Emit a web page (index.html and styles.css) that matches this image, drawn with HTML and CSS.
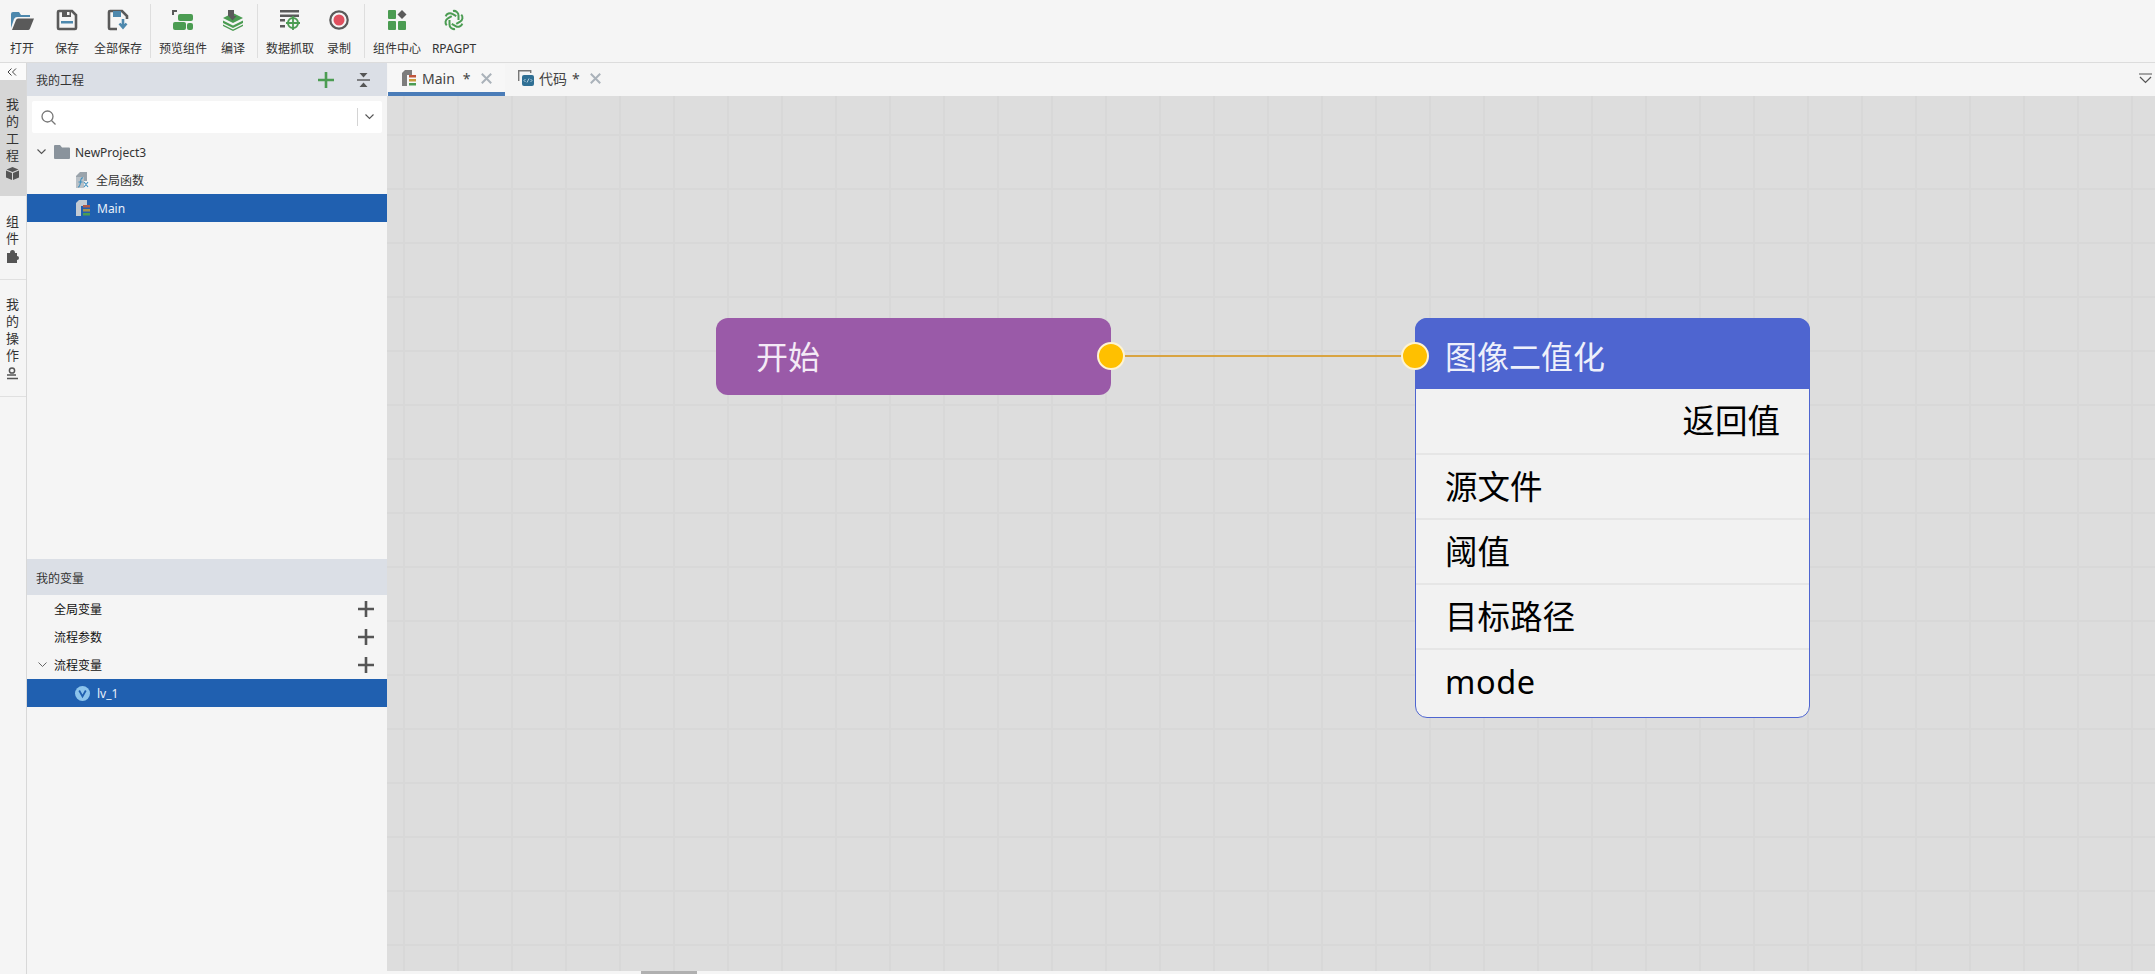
FILE: index.html
```html
<!DOCTYPE html>
<html lang="en">
<head>
  <meta charset="UTF-8" />
  <title>RPA Editor</title>
  <link rel="stylesheet" href="styles.css">
</head>
<body>

  <!-- Toolbar -->
  <header class="toolbar">
    <div class="tool-group group-file">
      <div class="tool w44">
        <svg width="26" height="22" viewBox="0 0 26 22"><path d="M2 19V5q0-2 2-2h6l2 3h9v2H8q-2 0-3 2l-3 9z" fill="#4d88ad"/><path d="M3 21l4-10q.6-1.500 2-1.500h16L21 19.500q-.6 1.500-2 1.500z" fill="#5a5a5a"/></svg>
        <span>打开</span>
      </div>
      <div class="tool w44 gap-left">
        <svg width="22" height="22" viewBox="0 0 22 22"><path d="M3 2h13l4 4v13q0 1-1 1H3q-1 0-1-1V3q0-1 1-1z" fill="none" stroke="#5a5a5a" stroke-width="2.600"/><rect x="6" y="2" width="9" height="6" fill="#5a5a5a"/><rect x="11" y="3" width="2.500" height="3" fill="#f5f5f5"/><rect x="5" y="12" width="12" height="2.500" fill="#4d88ad"/></svg>
        <span>保存</span>
      </div>
      <div class="tool w58">
        <svg width="22" height="22" viewBox="0 0 22 22"><path d="M10 20H3q-1 0-1-1V3q0-1 1-1h12l5 5v3" fill="none" stroke="#5a5a5a" stroke-width="2.600"/><rect x="6" y="2" width="8" height="6" fill="#4d88ad"/><path d="M16 10v7M12.500 14.500l3.500 4 3.500-4" fill="none" stroke="#4d88ad" stroke-width="2.600"/></svg>
        <span>全部保存</span>
      </div>
    </div>
    <div class="tool-group group-build">
      <div class="tool w62">
        <svg width="22" height="22" viewBox="0 0 22 22"><path d="M1 6V2h4" fill="none" stroke="#5a5a5a" stroke-width="2"/><rect x="6" y="5" width="15" height="7" rx="2" fill="#4b9c52"/><rect x="1" y="13" width="13" height="8" rx="2" fill="#4b9c52"/><rect x="15" y="14" width="6" height="7" rx="2" fill="#4b9c52"/></svg>
        <span>预览组件</span>
      </div>
      <div class="tool w38">
        <svg width="22" height="22" viewBox="0 0 22 22"><path d="M1 9l10-5 10 5-10 5z" fill="#4b9c52"/><path d="M1 11.500l10 5 10-5v2.500l-10 5-10-5z" fill="#4b9c52"/><path d="M1 15.500l10 5 10-5v1.500l-10 5-10-5z" fill="#4b9c52"/><path d="M6 1h6v6h2.500l-4 4.500-4-4.500H6z" fill="#5a5a5a"/></svg>
        <span>编译</span>
      </div>
    </div>
    <div class="tool-group group-capture">
      <div class="tool w62">
        <svg width="22" height="22" viewBox="0 0 22 22"><rect x="1" y="1" width="19" height="2.500" fill="#5a5a5a"/><rect x="1" y="5.500" width="19" height="2.500" fill="#5a5a5a"/><rect x="1" y="10" width="5" height="2.500" fill="#5a5a5a"/><rect x="1" y="16" width="5" height="2.500" fill="#5a5a5a"/><circle cx="14" cy="14" r="5" fill="none" stroke="#4b9c52" stroke-width="2"/><path d="M14 7v14M7 14h14" stroke="#4b9c52" stroke-width="1.800"/></svg>
        <span>数据抓取</span>
      </div>
      <div class="tool w36">
        <svg width="22" height="22" viewBox="0 0 22 22"><circle cx="11" cy="11" r="8.700" fill="none" stroke="#5a5a5a" stroke-width="2.200"/><circle cx="11" cy="11" r="5.500" fill="#e0505f"/></svg>
        <span>录制</span>
      </div>
    </div>
    <div class="tool-group group-extra">
      <div class="tool w62">
        <svg width="22" height="22" viewBox="0 0 22 22"><rect x="2" y="1" width="8" height="9" rx="1" fill="#4b9c52"/><path d="M16 1l4.500 4.500L16 10l-4.500-4.500z" fill="#5a5a5a"/><rect x="2" y="12" width="8" height="9" rx="1" fill="#4b9c52"/><rect x="12" y="12" width="8" height="9" rx="1" fill="#4b9c52"/></svg>
        <span>组件中心</span>
      </div>
      <div class="tool w52">
        <svg width="22" height="22" viewBox="0 0 22 22" fill="none" stroke="#4b9c52" stroke-width="2">
          <path d="M10 2a4.500 4.500 0 0 1 5.500 4.500V11"/>
          <path d="M10 2a4.500 4.500 0 0 1 5.500 4.500V11" transform="rotate(60 11 11)"/>
          <path d="M10 2a4.500 4.500 0 0 1 5.500 4.500V11" transform="rotate(120 11 11)"/>
          <path d="M10 2a4.500 4.500 0 0 1 5.500 4.500V11" transform="rotate(180 11 11)"/>
          <path d="M10 2a4.500 4.500 0 0 1 5.500 4.500V11" transform="rotate(240 11 11)"/>
          <path d="M10 2a4.500 4.500 0 0 1 5.500 4.500V11" transform="rotate(300 11 11)"/>
        </svg>
        <span>RPAGPT</span>
      </div>
    </div>
  </header>

  <div class="workspace">
    <!-- Left rail -->
    <aside class="rail">
      <div class="rail-collapse">
        <svg width="10" height="8" viewBox="0 0 10 8" fill="none" stroke="#444" stroke-width="1"><path d="M4.500 .5L1 4l3.500 3.500M9 .5L5.500 4 9 7.500"/></svg>
      </div>
      <div class="rail-item rail-active">
        <span>我的工程</span>
        <svg width="13" height="13" viewBox="0 0 13 13"><path d="M6.500 0l6 2.500-6 2.500-6-2.500z M0 3.500l6 2.500v7l-6-2.500z M13 3.500l-6 2.500v7l6-2.500z" fill="#555"/></svg>
      </div>
      <div class="rail-item rail-short">
        <span>组件</span>
        <svg width="13" height="13" viewBox="0 0 13 13"><path d="M1 3h3q0-3 2.500-3T9 3h2v3q2 0 2 2t-2 2v3H1z" fill="#555"/></svg>
      </div>
      <div class="rail-item rail-tall">
        <span>我的操作</span>
        <svg width="13" height="13" viewBox="0 0 13 13" fill="none" stroke="#555" stroke-width="1.500"><circle cx="6" cy="3.500" r="2.600"/><path d="M1 8h9M1 11.500h11"/></svg>
      </div>
    </aside>

    <!-- Project and variable panels -->
    <aside class="side">
      <div class="panel-head">
        <span>我的工程</span>
        <div class="head-actions">
          <svg width="16" height="16" viewBox="0 0 16 16"><path d="M8 0v16M0 8h16" stroke="#4b9c52" stroke-width="2.600"/></svg>
          <svg width="15" height="14" viewBox="0 0 15 14"><path d="M1 7h13" stroke="#555" stroke-width="1.400"/><path d="M3.500 0h8L7.500 4.500zM3.500 14h8l-4-4.500z" fill="#555"/></svg>
        </div>
      </div>
      <div class="search">
        <svg width="15" height="15" viewBox="0 0 15 15" fill="none" stroke="#777" stroke-width="1.300"><circle cx="6.500" cy="6.500" r="5.500"/><path d="M10.500 10.500l4 4"/></svg>
        <div class="search-drop">
          <svg width="9" height="6" viewBox="0 0 9 6" fill="none" stroke="#555" stroke-width="1.100"><path d="M.5 .5l4 4 4-4"/></svg>
        </div>
      </div>
      <ul class="tree">
        <li class="tree-row">
          <svg class="caret" width="9" height="6" viewBox="0 0 9 6" fill="none" stroke="#555" stroke-width="1.100"><path d="M.5 .5l4 4 4-4"/></svg>
          <svg width="16" height="14" viewBox="0 0 16 14"><path d="M0 1q0-1 1-1h5l2 2.500h7q1 0 1 1V13q0 1-1 1H1q-1 0-1-1z" fill="#8a939c"/></svg>
          <span>NewProject3</span>
        </li>
        <li class="tree-row row-child">
          <svg width="14" height="16" viewBox="0 0 14 16"><path d="M5 0h7v9H1V4z" fill="#9aa3ab"/><rect x="1" y="5" width="8" height="11" fill="#b9c0c6"/><path d="M3 15q2 0 2.500-5T8 6M3.500 10h4M9 10l4 5M13 10l-4 5" fill="none" stroke="#3d8fc0" stroke-width="1.100"/></svg>
          <span>全局函数</span>
        </li>
        <li class="tree-row row-child row-selected">
          <svg width="15" height="16" viewBox="0 0 15 16"><path d="M4 0h8v6H1V3z" fill="#c3cbd3"/><rect x="1" y="5" width="5" height="11" fill="#c3cbd3"/><rect x="8" y="5" width="7" height="2.500" fill="#b05a48"/><rect x="8" y="9" width="7" height="2.500" fill="#a8924a"/><rect x="8" y="13" width="7" height="2.500" fill="#4b9c52"/></svg>
          <span>Main</span>
        </li>
      </ul>

      <div class="panel-head var-head"><span>我的变量</span></div>
      <ul class="tree var-tree">
        <li class="tree-row row-var">
          <span>全局变量</span>
          <svg class="row-add" width="16" height="16" viewBox="0 0 16 16"><path d="M8 0v16M0 8h16" stroke="#555" stroke-width="2.600"/></svg>
        </li>
        <li class="tree-row row-var">
          <span>流程参数</span>
          <svg class="row-add" width="16" height="16" viewBox="0 0 16 16"><path d="M8 0v16M0 8h16" stroke="#555" stroke-width="2.600"/></svg>
        </li>
        <li class="tree-row row-var row-open">
          <svg class="caret" width="9" height="6" viewBox="0 0 9 6" fill="none" stroke="#666" stroke-width="1"><path d="M.5 .5l4 4 4-4"/></svg>
          <span>流程变量</span>
          <svg class="row-add" width="16" height="16" viewBox="0 0 16 16"><path d="M8 0v16M0 8h16" stroke="#555" stroke-width="2.600"/></svg>
        </li>
        <li class="tree-row row-child row-selected">
          <svg width="15" height="15" viewBox="0 0 15 15"><circle cx="7.500" cy="7.500" r="7.500" fill="#8cc4ec"/><path d="M4.200 4.500l3.300 6 3.300-6" fill="none" stroke="#2060b0" stroke-width="1.800"/></svg>
          <span>lv_1</span>
        </li>
      </ul>
    </aside>

    <!-- Editor -->
    <main class="editor">
      <div class="tabs">
        <div class="tab tab-active">
          <svg width="15" height="16" viewBox="0 0 15 16"><path d="M4 0h7v5H1V3z" fill="#7d7d7d"/><rect x="1" y="5" width="5" height="11" fill="#7d7d7d"/><rect x="8" y="5" width="7" height="2.500" fill="#c0563c"/><rect x="8" y="9" width="7" height="2.500" fill="#c99a3c"/><rect x="8" y="13" width="7" height="2.500" fill="#4b9c52"/></svg>
          <span class="tab-name">Main</span>
          <span class="tab-mark">*</span>
          <svg class="tab-close" width="11" height="11" viewBox="0 0 11 11"><path d="M.8 .8l9.400 9.400M10.200 .8L.8 10.200" stroke="#aab2ba" stroke-width="2"/></svg>
        </div>
        <div class="tab tab-code">
          <svg width="16" height="16" viewBox="0 0 16 16"><path d="M.7 11V.7h12V3" fill="none" stroke="#777" stroke-width="1.400"/><rect x="4" y="5" width="12" height="11" rx="2" fill="#2f6f94"/><path d="M7.500 9l-1.500 1.500L7.500 12M12.500 9l1.500 1.500L12.500 12M9 12.500l2-4" fill="none" stroke="#cfe3ee" stroke-width=".8"/></svg>
          <span>代码</span>
          <span class="tab-mark">*</span>
          <svg class="tab-close" width="11" height="11" viewBox="0 0 11 11"><path d="M.8 .8l9.400 9.400M10.200 .8L.8 10.200" stroke="#aab2ba" stroke-width="2"/></svg>
        </div>
        <svg class="tabs-more" width="13" height="11" viewBox="0 0 13 11" fill="none" stroke="#555" stroke-width="1.200"><path d="M0 1h13M1 4l5.500 5.500L12 4"/></svg>
      </div>

      <div class="canvas">
        <!-- link between the two nodes -->
        <div class="link"></div>

        <div class="node node-start">
          <span>开始</span>
          <i class="port port-out"></i>
        </div>

        <div class="node node-func">
          <div class="func-head">
            <span>图像二值化</span>
            <i class="port port-in"></i>
          </div>
          <div class="func-row row-right">返回值</div>
          <div class="func-row">源文件</div>
          <div class="func-row">阈值</div>
          <div class="func-row">目标路径</div>
          <div class="func-row row-latin">mode</div>
        </div>
      </div>

      <div class="hscroll"><div class="hscroll-thumb"></div></div>
    </main>
  </div>

</body>
</html>
```

FILE: styles.css
```css
* {
  box-sizing: border-box;
  margin: 0;
  padding: 0;
  font-family: 'Noto Sans', 'Noto Sans CJK SC', sans-serif;
}

html, body {
  height: 100%;
  overflow: hidden;
}

body {
  display: flex;
  flex-direction: column;
  background: #f5f5f5;
  color: #333;
  font-size: 12px;
}

svg {
  display: block;
  flex: none;
}

ul {
  list-style: none;
}

/* Toolbar */
.toolbar {
  display: flex;
  height: 63px;
  flex: none;
  padding-top: 4px;
  border-bottom: 1px solid #dcdcdc;
}

.tool-group {
  display: flex;
  height: 54px;
  border-right: 1px solid #dedede;
}

.group-file { width: 151px; }
.group-build { width: 107px; padding-left: 1px; }
.group-capture { width: 107px; padding-left: 1px; }
.group-extra { padding-left: 1px; border-right: none; }

.tool {
  display: flex;
  flex-direction: column;
  align-items: center;
  justify-content: space-between;
  padding: 5px 0 1px;
  height: 54px;
  line-height: 17px;
  white-space: nowrap;
}

.w36 { width: 36px; }
.w38 { width: 38px; }
.w44 { width: 44px; }
.w52 { width: 52px; }
.w58 { width: 58px; }
.w62 { width: 62px; }
.gap-left { margin-left: 1px; }

.workspace {
  display: flex;
  flex: 1;
  min-height: 0;
}

/* Left rail */
.rail {
  width: 27px;
  flex: none;
  border-right: 1px solid #d8d8d8;
}

.rail-collapse {
  display: flex;
  justify-content: center;
  align-items: center;
  height: 17px;
  padding-right: 2px;
  background: #fafafa;
}

.rail-item {
  display: flex;
  flex-direction: column;
  align-items: center;
  justify-content: center;
  gap: 3px;
  height: 116px;
  padding-right: 1px;
  border-bottom: 1px solid #e0e0e0;
}

.rail-item span {
  width: 13px;
  font-size: 13px;
  line-height: 17px;
  text-align: center;
}

.rail-active {
  background: #d6d6d6;
  border-bottom: none;
}

.rail-short { height: 84px; }
.rail-tall { height: 117px; }

/* Side panels */
.side {
  display: flex;
  flex-direction: column;
  width: 360px;
  flex: none;
}

.panel-head {
  display: flex;
  justify-content: space-between;
  align-items: center;
  height: 33px;
  flex: none;
  padding: 0 16px 0 9px;
  background: #dbdfe6;
}

.head-actions {
  display: flex;
  align-items: center;
  gap: 22px;
}

.search {
  display: flex;
  justify-content: space-between;
  align-items: center;
  height: 32px;
  margin: 5px;
  padding: 0 8px 0 9px;
  background: #fff;
  border-radius: 2px;
}

.search-drop {
  display: flex;
  align-items: center;
  height: 18px;
  padding-left: 7px;
  border-left: 1px solid #d4d4d4;
}

.tree {
  height: 421px;
  flex: none;
}

.tree-row {
  display: flex;
  align-items: center;
  gap: 5px;
  height: 28px;
  padding-left: 10px;
  color: #333;
  white-space: nowrap;
}

.row-child {
  padding-left: 48px;
  gap: 7px;
}

.row-selected {
  background: #2060b0;
  color: #e8f0fa;
}

.caret {
  margin-right: 3px;
}

.var-head {
  height: 36px;
  padding-top: 2px;
}

.var-tree {
  flex: 1;
}

.row-var {
  padding-left: 27px;
  padding-right: 13px;
  color: #111;
}

.row-open {
  padding-left: 11px;
  gap: 0;
}

.row-open .caret {
  margin-right: 7px;
}

.row-add {
  margin-left: auto;
}

/* Editor */
.editor {
  display: flex;
  flex-direction: column;
  flex: 1;
  min-width: 0;
}

.tabs {
  display: flex;
  height: 33px;
  flex: none;
  padding: 1px 0 0 1px;
  font-size: 14px;
  color: #444;
}

.tab {
  display: flex;
  align-items: center;
  gap: 5px;
  width: 117px;
  padding: 0 0 4px 13px;
  white-space: nowrap;
}

.tab-active {
  border-bottom: 4px solid #4a7cb8;
  padding-bottom: 0;
  background: #f7f7f7;
}

.tab-name {
  margin-left: 1px;
}

.tab-mark {
  margin-left: 3px;
}

.tab-close {
  margin-left: 5px;
}

.tab-code .tab-mark {
  margin-left: 0;
}

.tab-code .tab-close {
  margin-left: 5px;
}

.tabs-more {
  margin: 9px 3px 0 auto;
}

/* Canvas grid, lines every 54px */
.canvas {
  position: relative;
  flex: 1;
  overflow: hidden;
  background-color: #dddddd;
  background-image:
    linear-gradient(to right, #d8d8d8 2px, transparent 2px),
    linear-gradient(to bottom, #d8d8d8 2px, transparent 2px);
  background-size: 54px 54px;
  background-position: 16px 38px;
}

.link {
  position: absolute;
  left: 737px;
  top: 259px;
  width: 278px;
  height: 2px;
  background: #d9a441;
}

.node {
  position: absolute;
  width: 395px;
  font-size: 32px;
  line-height: 44px;
}

.node-start {
  left: 329px;
  top: 222px;
  height: 77px;
  display: flex;
  align-items: center;
  padding-left: 40px;
  background: #9a5aa8;
  border-radius: 12px;
  color: #f4eaf6;
}

.node-func {
  left: 1028px;
  top: 222px;
  height: 400px;
  background: #f2f2f2;
  border: 1px solid #4e65d0;
  border-radius: 12px;
  color: #000;
}

.func-head {
  position: relative;
  display: flex;
  align-items: center;
  height: 71px;
  margin: -1px -1px 0;
  padding: 6px 0 0 30px;
  background: #4e65d0;
  border-radius: 12px 12px 0 0;
  color: #eef0fb;
}

.func-row {
  display: flex;
  align-items: center;
  height: 65px;
  padding-left: 29px;
  font-size: 32.500px;
  border-bottom: 2px solid #e6e6e6;
}

.func-row:last-child {
  border-bottom: none;
  height: 64px;
}

.row-right {
  justify-content: flex-end;
  height: 66px;
  padding-right: 29px;
}

.row-latin {
  letter-spacing: 0.6px;
}

.port {
  position: absolute;
  width: 28px;
  height: 28px;
  background: #ffc000;
  border: 2px solid #fdf3d2;
  border-radius: 50%;
}

.port-out {
  right: -14px;
  top: 24px;
}

.port-in {
  left: -14px;
  top: 24px;
}

.hscroll {
  height: 3px;
  flex: none;
  background: #f5f5f5;
}

.hscroll-thumb {
  width: 56px;
  height: 3px;
  margin-left: 254px;
  background: #b0b0b0;
}
```
